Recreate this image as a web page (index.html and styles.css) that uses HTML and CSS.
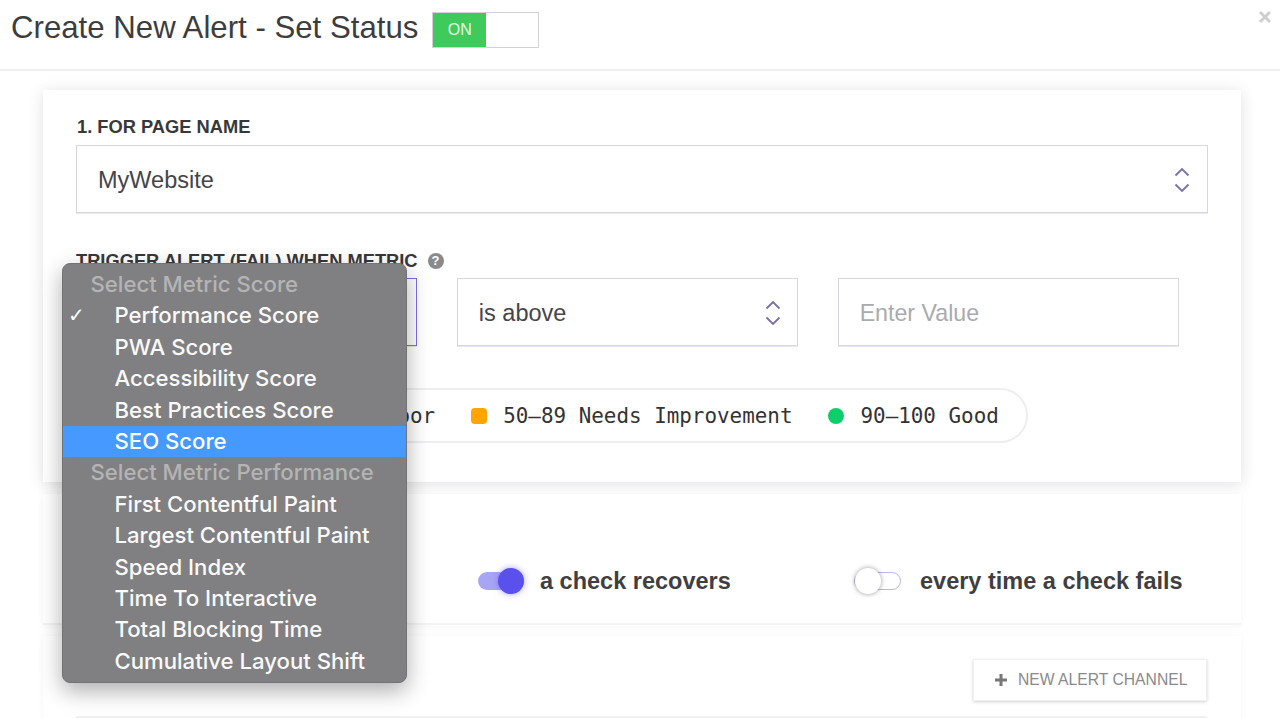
FILE: index.html
```html
<!DOCTYPE html>
<html lang="en">
<head>
<meta charset="utf-8">
<title>Create New Alert</title>
<link rel="stylesheet" href="styles.css">
</head>
<body>
<div class="page">
  <header class="header">
    <h1 class="title">Create New Alert - Set Status</h1>
    <div class="status"><span class="status-on">ON</span><span class="status-off"></span></div>
    <svg class="close" viewBox="0 0 14 14" width="14" height="14"><path d="M2 2l10 10M12 2L2 12"/></svg>
  </header>
  <main class="main">
    <section class="card card-primary">
      <div class="label label-first">1. FOR PAGE NAME</div>
      <div class="field field-wide">
        <span>MyWebsite</span>
        <svg class="updown" viewBox="0 0 16 28" width="16" height="28"><path d="M1.5 9.5L8 3l6.5 6.5M1.5 18.5L8 25l6.5-6.5"/></svg>
      </div>
      <div class="label label-second">TRIGGER ALERT (FAIL) WHEN METRIC <span class="help">?</span></div>
      <div class="field-row">
        <div class="field field-active"></div>
        <div class="field">
          <span>is above</span>
          <svg class="updown" viewBox="0 0 16 28" width="16" height="28"><path d="M1.5 9.5L8 3l6.5 6.5M1.5 18.5L8 25l6.5-6.5"/></svg>
        </div>
        <div class="field field-placeholder"><span>Enter Value</span></div>
      </div>
      <div class="legend">
        <span class="legend-item"><i class="dot dot-red"></i>0–49 Poor</span>
        <span class="legend-item"><i class="dot dot-orange"></i>50–89 Needs Improvement</span>
        <span class="legend-item"><i class="dot dot-green"></i>90–100 Good</span>
      </div>
    </section>
    <section class="card card-notify">
      <label class="switch-item switch-recovers"><span class="switch switch-on"><i></i></span>a check recovers</label>
      <label class="switch-item switch-fails"><span class="switch"><i></i></span>every time a check fails</label>
    </section>
    <section class="card card-channels">
      <button class="add-button" type="button">
        <svg viewBox="0 0 12 12" width="12" height="12"><path d="M6 0v12M0 6h12"/></svg>NEW ALERT CHANNEL
      </button>
      <div class="channel-list"></div>
    </section>
  </main>
  <div class="menu">
    <div class="menu-group">Select Metric Score</div>
    <div class="menu-item"><span class="tick">✓</span>Performance Score</div>
    <div class="menu-item">PWA Score</div>
    <div class="menu-item">Accessibility Score</div>
    <div class="menu-item">Best Practices Score</div>
    <div class="menu-item menu-selected">SEO Score</div>
    <div class="menu-group">Select Metric Performance</div>
    <div class="menu-item">First Contentful Paint</div>
    <div class="menu-item">Largest Contentful Paint</div>
    <div class="menu-item">Speed Index</div>
    <div class="menu-item">Time To Interactive</div>
    <div class="menu-item">Total Blocking Time</div>
    <div class="menu-item">Cumulative Layout Shift</div>
  </div>
</div>
</body>
</html>
```
FILE: styles.css
```css
* { box-sizing: border-box; }
html, body { margin: 0; padding: 0; background: #fff; }
body { font-family: "Liberation Sans", Arial, sans-serif; color: #3c3c3f; }
.page { position: relative; width: 1280px; height: 719px; overflow: hidden; }

.header {
  position: relative; height: 71px; display: flex; align-items: flex-start; gap: 14px;
  padding: 10px 0 0 11px; border-bottom: 2px solid #efeff1;
}
.title { margin: 1px 0 0; font-size: 31.2px; line-height: 34px; font-weight: 400; color: #3d3d40; white-space: nowrap; }
.status { display: flex; width: 107px; height: 36px; margin-top: 2px; border: 1px solid #d2d2d6; }
.status-on {
  width: 53px; background: #3fca5c; color: #e8fbe9; font-size: 16px; display: flex;
  align-items: center; justify-content: center;
}
.status-off { flex: 1; }
.close { position: absolute; top: 10px; right: 8px; fill: none; stroke: #cfcfd2; stroke-width: 3; }

.main { padding: 19px 39px 0 43px; display: flex; flex-direction: column; }
.card { background: #fff; }
.card-primary {
  height: 392px; padding: 27px 33px 0;
  box-shadow: 0 2px 14px rgba(60, 60, 90, .16);
}
.label { font-size: 18.3px; line-height: 20px; font-weight: 700; color: #38383b; }
.label-first { padding-left: 1px; }
.label-second { margin-top: 38px; display: flex; align-items: center; gap: 10px; }
.field {
  position: relative; display: flex; align-items: center; justify-content: space-between;
  height: 68px; padding: 2px 16px 0 21px; border: 1px solid #d6d6e4;
  box-shadow: 0 1px 0 #e8e8f0;
  font-size: 23.5px; color: #45454a;
}
.field-wide { margin-top: 8px; padding-right: 17px; }
.field-row { margin-top: 7px; width: 1103px; display: grid; grid-template-columns: repeat(3, 1fr); gap: 39.5px; }
.field-active { border-color: #7a70e6; }
.field-placeholder { color: #aaaaae; font-size: 23.2px; }
.updown { fill: none; stroke: #7471ad; stroke-width: 1.8; }
.help {
  width: 16px; height: 16px; border-radius: 50%; background: #8a8a8d; color: #fff;
  font-size: 13px; line-height: 16px; text-align: center;
}
.legend {
  display: inline-flex; align-items: center; gap: 36px; margin: 42px 0 0 190px; height: 55px;
  padding: 0 27px 0 22px; border: 2px solid #eeeef0; border-radius: 28px;
  font-family: "DejaVu Sans Mono", "Liberation Mono", monospace; font-size: 20.9px; color: #333;
}
.legend-item { display: flex; align-items: center; gap: 16px; white-space: nowrap; }
.dot { display: block; width: 16px; height: 16px; border-radius: 50%; }
.dot-red { background: #f44; }
.dot-orange { background: #ffa400; border-radius: 4px; }
.dot-green { background: #0cce6b; }

.card-notify {
  height: 131px; margin-top: 12px; position: relative; display: flex; align-items: flex-end;
  padding: 0 0 28px 435px; border-bottom: 2px solid #f3f3f5;
  box-shadow: 0 1px 8px rgba(60, 60, 90, .04);
}
.switch-item { display: flex; align-items: center; font-size: 23.5px; line-height: 28px; font-weight: 700; color: #3f3f43; }
.switch-recovers { width: 376px; gap: 16px; }
.switch-fails { gap: 19px; }
.switch {
  position: relative; display: block; width: 46px; height: 18px; border-radius: 9px;
  background: #a9a5f5;
}
.switch i {
  position: absolute; top: -4px; right: 0; width: 26px; height: 26px; border-radius: 50%;
  background: #5a50ee; box-shadow: 0 0 6px rgba(90, 80, 238, .55);
}
.switch:not(.switch-on) { width: 47px; background: #fff; border: 1px solid #b9b5ee; }
.switch:not(.switch-on) i { left: 0; right: auto; top: -5px; background: #fff; box-shadow: 0 0 5px rgba(0, 0, 0, .4); }

.card-channels {
  margin-top: 11px; height: 120px; padding: 23px 34px 0 0; display: flex; flex-direction: column;
  align-items: flex-end; box-shadow: 0 1px 8px rgba(60, 60, 90, .04);
}
.add-button {
  width: 234px; height: 42px; flex: none; display: flex; align-items: center; gap: 11px; padding: 0 0 0 21px;
  background: #fff; border: 1px solid #f0f0f2; box-shadow: 0 1px 3px rgba(0, 0, 0, .18);
  font-family: "Liberation Sans", Arial, sans-serif; font-size: 15.7px; color: #8a8a8d;
}
.add-button svg { fill: none; stroke: #77777a; stroke-width: 3; }
.channel-list { align-self: stretch; margin: 15px 0 0 33px; height: 30px; border-top: 2px solid #f0f0f2; }

.menu {
  position: absolute; left: 62px; top: 263px; width: 345px; height: 420px; padding: 5px 0 0;
  background: #808082; border: 1px solid #737375; border-radius: 8px;
  box-shadow: 0 8px 22px rgba(0, 0, 0, .32);
  font-family: Inter, "Liberation Sans", sans-serif; font-size: 22.15px; font-weight: 450;
}
.menu-group, .menu-item { position: relative; height: 31.4px; line-height: 31.4px; white-space: nowrap; }
.menu-group { padding-left: 27.5px; color: #b4b4b5; }
.menu-item { padding-left: 51.5px; color: #fafafa; }
.menu-selected { background: #4599ff; color: #fff; }
.tick { position: absolute; left: 5px; top: 0; font-family: "DejaVu Sans", sans-serif; font-size: 20px; font-weight: 400; }
```
